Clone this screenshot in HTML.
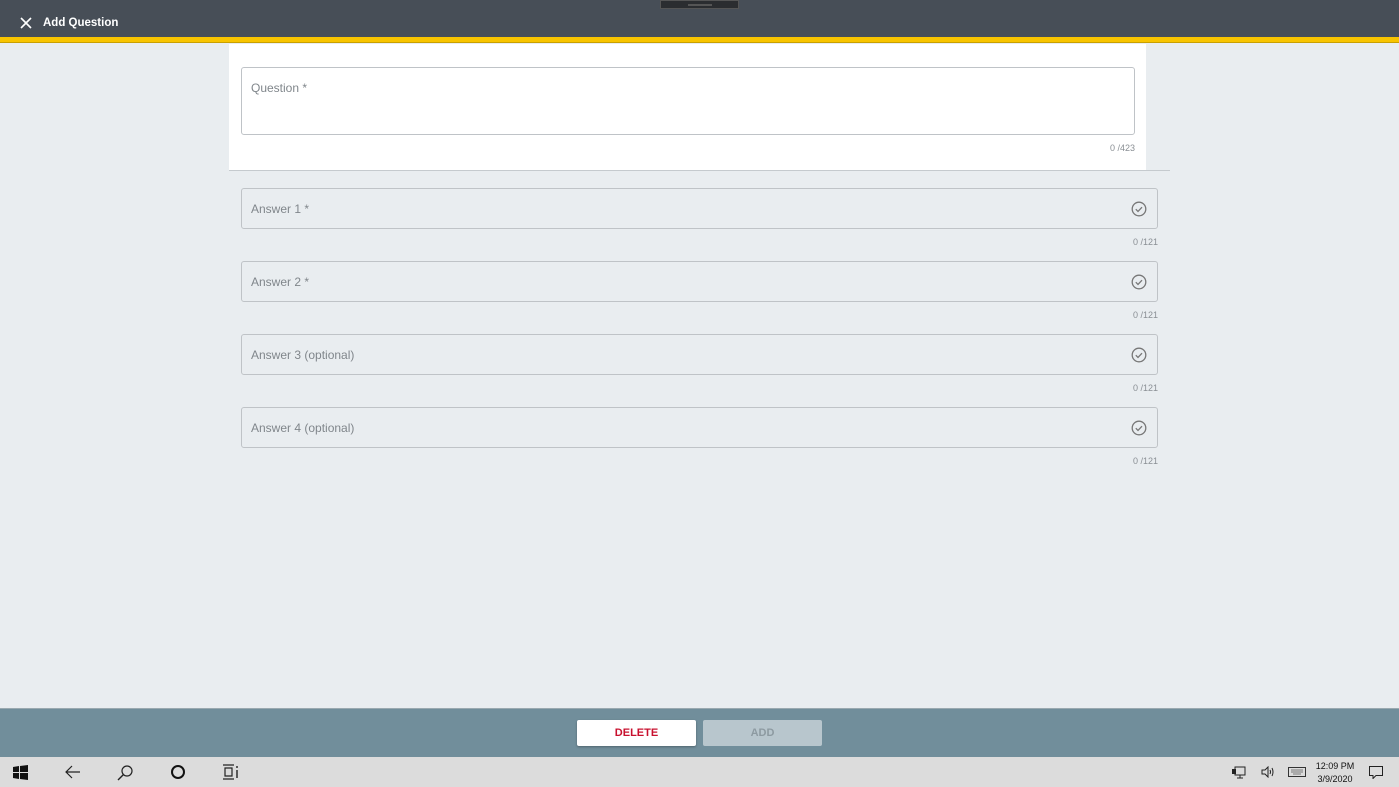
<!DOCTYPE html>
<html><head><style>
*{margin:0;padding:0;box-sizing:border-box}
body{width:1399px;height:787px;overflow:hidden;background:#e9edf0;font-family:"Liberation Sans",sans-serif;position:relative}
.hdr{position:absolute;left:0;top:0;width:1399px;height:37px;background:#474e57}
.yl{position:absolute;left:0;top:37px;width:1399px;height:6px;background:#f8c400;border-bottom:1px solid #c9a000}
.tab{position:absolute;left:660px;top:0;width:79px;height:9px;background:#2b2d30;border:1px solid #555}
.tab i{position:absolute;left:27px;top:3px;width:24px;height:2px;background:#555}
.title{position:absolute;left:43px;top:17px;color:#fff;font-weight:bold;font-size:11.5px}
.panel{position:absolute;left:229px;top:44px;width:917px;height:126px;background:#fff}
.line{position:absolute;left:229px;top:170px;width:941px;height:1px;background:#c5cace}
.q{position:absolute;left:241px;top:67px;width:894px;height:68px;border:1px solid #bfc3c7;border-radius:3px;background:#fff}
.lbl{position:absolute;left:9px;color:#80868b;font-size:12px}
.cnt{position:absolute;font-size:9px;color:#8a8f94;text-align:right}
.a{position:absolute;left:241px;width:917px;height:41px;border:1px solid #bfc3c7;border-radius:3px}
.a .lbl{top:13px}
.a svg{position:absolute;right:10px;top:12px}
.bar{position:absolute;left:0;top:708px;width:1399px;height:49px;background:#718e9b;border-top:1px solid #9aa9b0}
.btn{position:absolute;top:720px;width:119px;height:26px;border-radius:2px;font-size:11px;font-weight:bold;text-align:center;line-height:26px}
.tb{position:absolute;left:0;top:757px;width:1399px;height:30px;background:#dcdcdc}
</style></head><body>
<div class="hdr"></div><div class="tab"><i></i></div>
<svg style="position:absolute;left:20px;top:17px" width="12" height="12" viewBox="0 0 12 12"><path d="M1 1L11 11M11 1L1 11" stroke="#fff" stroke-width="1.6"/></svg>
<div class="title">Add Question</div>
<div class="yl"></div>
<div class="panel"></div>
<div class="q"><div class="lbl" style="top:13px">Question *</div></div>
<div class="cnt" style="left:1080px;top:143px;width:55px">0 /423</div>
<div class="line"></div>

<div class="a" style="top:188px"><div class="lbl">Answer 1 *</div><svg width="16" height="16" viewBox="0 0 16 16"><circle cx="8" cy="8" r="6.8" fill="none" stroke="#777" stroke-width="1.3"/><path d="M4.8 8.2l2.2 2.2 4-4.2" fill="none" stroke="#777" stroke-width="1.3"/></svg></div>
<div class="cnt" style="left:1100px;top:237px;width:58px">0 /121</div>
<div class="a" style="top:261px"><div class="lbl">Answer 2 *</div><svg width="16" height="16" viewBox="0 0 16 16"><circle cx="8" cy="8" r="6.8" fill="none" stroke="#777" stroke-width="1.3"/><path d="M4.8 8.2l2.2 2.2 4-4.2" fill="none" stroke="#777" stroke-width="1.3"/></svg></div>
<div class="cnt" style="left:1100px;top:310px;width:58px">0 /121</div>
<div class="a" style="top:334px"><div class="lbl">Answer 3 (optional)</div><svg width="16" height="16" viewBox="0 0 16 16"><circle cx="8" cy="8" r="6.8" fill="none" stroke="#777" stroke-width="1.3"/><path d="M4.8 8.2l2.2 2.2 4-4.2" fill="none" stroke="#777" stroke-width="1.3"/></svg></div>
<div class="cnt" style="left:1100px;top:383px;width:58px">0 /121</div>
<div class="a" style="top:407px"><div class="lbl">Answer 4 (optional)</div><svg width="16" height="16" viewBox="0 0 16 16"><circle cx="8" cy="8" r="6.8" fill="none" stroke="#777" stroke-width="1.3"/><path d="M4.8 8.2l2.2 2.2 4-4.2" fill="none" stroke="#777" stroke-width="1.3"/></svg></div>
<div class="cnt" style="left:1100px;top:456px;width:58px">0 /121</div>

<div class="bar"></div>
<div class="btn" style="left:577px;background:#fff;color:#c8102e;box-shadow:0 1px 2px rgba(0,0,0,.3)">DELETE</div>
<div class="btn" style="left:703px;background:#b8c6cd;color:#8d9aa1">ADD</div>

<div class="tb"></div>
<svg style="position:absolute;left:13px;top:765px" width="15" height="15" viewBox="0 0 15 15"><path d="M0 2l6-1v6H0zM7 1l8-1v7H7zM0 8h6v6l-6-1zM7 8h8v7l-8-1z" fill="#111"/></svg>
<svg style="position:absolute;left:64px;top:764px" width="17" height="16" viewBox="0 0 17 16"><path d="M16 8H2M8 2L2 8l6 6" fill="none" stroke="#222" stroke-width="1.2"/></svg>
<svg style="position:absolute;left:117px;top:764px" width="17" height="17" viewBox="0 0 17 17"><circle cx="10" cy="7" r="5" fill="none" stroke="#222" stroke-width="1.2"/><path d="M6.5 10.5L1 16" stroke="#222" stroke-width="1.4"/></svg>
<svg style="position:absolute;left:170px;top:764px" width="16" height="16" viewBox="0 0 16 16"><circle cx="8" cy="8" r="6" fill="none" stroke="#111" stroke-width="2"/></svg>
<svg style="position:absolute;left:222px;top:764px" width="17" height="16" viewBox="0 0 17 16"><path d="M1 1h11M1 15h11M3 4h7v8H3z" fill="none" stroke="#222" stroke-width="1.2"/><path d="M15 2v2M15 6v8" stroke="#222" stroke-width="1.4"/></svg>
<svg style="position:absolute;left:1232px;top:766px" width="14" height="13" viewBox="0 0 14 13"><path d="M3 1h10v8H3zM8 9v3M5 12h6" fill="none" stroke="#222"/><rect x="0" y="3" width="4" height="5" fill="#222"/></svg>
<svg style="position:absolute;left:1261px;top:766px" width="14" height="12" viewBox="0 0 14 12"><path d="M1 4h3l3-3v10L4 8H1z" fill="none" stroke="#222"/><path d="M9 4q1 2 0 4M11 2q2 4 0 8" fill="none" stroke="#222"/></svg>
<svg style="position:absolute;left:1288px;top:767px" width="18" height="10" viewBox="0 0 18 10"><rect x=".5" y=".5" width="17" height="9" fill="none" stroke="#333"/><path d="M3 3h12M3 5h12M5 7h8" stroke="#777"/></svg>
<div style="position:absolute;left:1310px;top:760px;width:50px;font-size:9px;color:#111;text-align:center;line-height:13px">12:09 PM<br>3/9/2020</div>
<svg style="position:absolute;left:1369px;top:766px" width="14" height="13" viewBox="0 0 14 13"><path d="M.5 .5h13v9H7l-3 3v-3H.5z" fill="none" stroke="#222"/></svg>
</body></html>
